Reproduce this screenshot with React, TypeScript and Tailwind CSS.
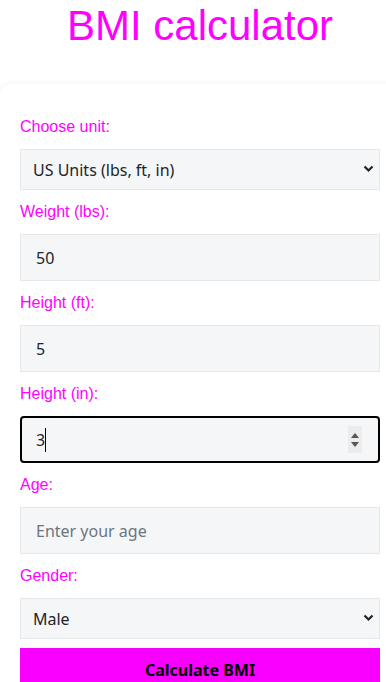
import React, { useState } from 'react';

const labelCls = "block h-[18px] leading-[18px] mb-[13px] text-[16px] text-[#ff00ff] font-['Liberation_Sans',Arial,sans-serif]";
const fieldCls = "block w-[360px] bg-[#f5f6f8] border border-[#e6e7e9] text-[16px] text-[#212529] outline-none font-['Noto_Sans',sans-serif]";

const App: React.FC = () => {
  const [unit, setUnit] = useState('us');
  const [weight, setWeight] = useState('50');
  const [feet, setFeet] = useState('5');
  const [inches, setInches] = useState('3');
  const [age, setAge] = useState('');
  const [gender, setGender] = useState('male');

  return (
    <div className="min-h-screen bg-white overflow-hidden">
      <div className="w-[400px]">
        <h1 className="pt-[2px] text-center text-[42px] leading-[48px] text-[#ff00ff] font-['Liberation_Sans',Arial,sans-serif]">
          BMI calculator
        </h1>

        <div className="mt-[34px] w-[400px] rounded-xl bg-white shadow-[0_0_8px_rgba(0,0,0,0.05)] px-5 pt-[34px] pb-5">
          <label className={labelCls}>Choose unit:</label>
          <div className="relative mb-[13px]">
            <select value={unit} onChange={e => setUnit(e.target.value)}
              className={`${fieldCls} h-[41px] pl-3 appearance-none`}>
              <option value="us">US Units (lbs, ft, in)</option>
              <option value="metric">Metric Units (kg, cm)</option>
            </select>
            <svg className="absolute right-[6px] top-[16px] pointer-events-none" width="11" height="8" viewBox="0 0 11 8">
              <path d="M1.5 1.5 L5.5 5.5 L9.5 1.5" stroke="#222" strokeWidth="2.2" fill="none" />
            </svg>
          </div>

          <label className={labelCls}>Weight (lbs):</label>
          <input type="text" value={weight} onChange={e => setWeight(e.target.value)}
            className={`${fieldCls} h-[47px] px-[15px] mb-[13px]`} />

          <label className={labelCls}>Height (ft):</label>
          <input type="text" value={feet} onChange={e => setFeet(e.target.value)}
            className={`${fieldCls} h-[47px] px-[15px] mb-[13px]`} />

          <label className={labelCls}>Height (in):</label>
          <div className="relative mb-[13px]">
            <input type="text" value={inches} onChange={e => setInches(e.target.value)}
              className={`${fieldCls} h-[47px] px-[14px] border-2 border-black rounded-[4px]`} />
            <span className="absolute left-[25px] top-[12px] w-px h-[24px] bg-black" />
            <div className="absolute right-[18px] top-[10px] w-[14px] h-[27px] bg-[#ececec] flex flex-col items-center justify-center gap-[4px] pointer-events-none">
              <svg width="8" height="5" viewBox="0 0 8 5"><path d="M0 5 L4 0 L8 5 Z" fill="#555" /></svg>
              <svg width="8" height="5" viewBox="0 0 8 5"><path d="M0 0 L4 5 L8 0 Z" fill="#555" /></svg>
            </div>
          </div>

          <label className={labelCls}>Age:</label>
          <input type="text" value={age} onChange={e => setAge(e.target.value)} placeholder="Enter your age"
            className={`${fieldCls} h-[47px] px-[15px] mb-[13px] placeholder:text-[#6c757d]`} />

          <label className={labelCls}>Gender:</label>
          <div className="relative mb-[9px]">
            <select value={gender} onChange={e => setGender(e.target.value)}
              className={`${fieldCls} h-[41px] pl-3 appearance-none`}>
              <option value="male">Male</option>
              <option value="female">Female</option>
            </select>
            <svg className="absolute right-[6px] top-[16px] pointer-events-none" width="11" height="8" viewBox="0 0 11 8">
              <path d="M1.5 1.5 L5.5 5.5 L9.5 1.5" stroke="#222" strokeWidth="2.2" fill="none" />
            </svg>
          </div>

          <button className="block w-[360px] h-[44px] bg-[#f700ff] text-black text-[16px] font-bold font-['Noto_Sans',sans-serif]">
            Calculate BMI
          </button>
        </div>
      </div>
    </div>
  );
};

export default App;
